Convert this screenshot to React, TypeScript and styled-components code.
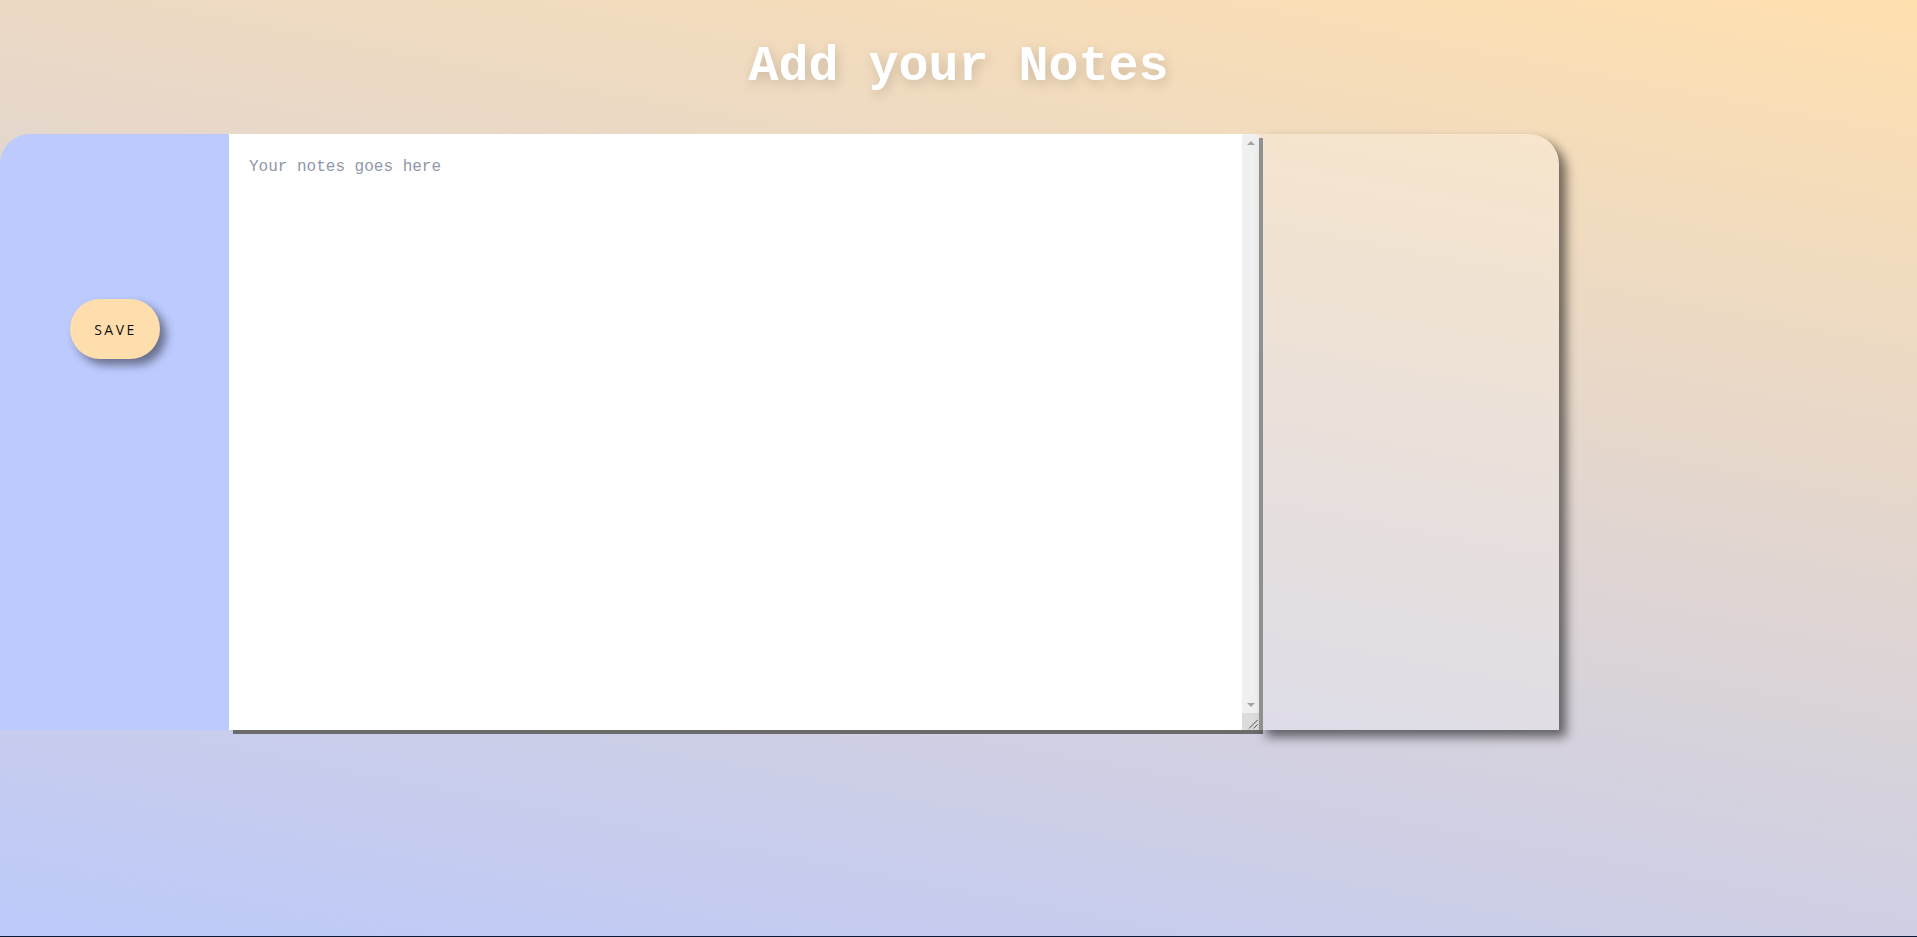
import styled, { createGlobalStyle } from 'styled-components'

const GlobalStyle = createGlobalStyle`
    * {
        box-sizing: border-box;
    }
    body {
        margin: 0;
        font-family: "Liberation Sans", Arial, sans-serif;
    }
`

const Page = styled.div`
    height: 100vh;
    border-bottom: 1px solid #0c1a3a;
    background: linear-gradient(11deg, #bcc9fa 0%, #ffe0af 100%);
    overflow: hidden;
`

const Header = styled.header`
    height: 134px;
    padding-top: 37px;
`

const Title = styled.h1`
    margin: 0;
    text-align: center;
    font-family: "Liberation Mono", "Courier New", monospace;
    font-size: 50px;
    line-height: 60px;
    font-weight: bold;
    color: #ffffff;
    text-shadow: 2px 4px 12px rgba(0, 0, 0, 0.16);
`

const Board = styled.div`
    display: flex;
    height: 596px;
    width: 1559px;
`

const SidePanel = styled.div`
    flex: 0 0 229px;
    background: #bccafe;
    border-top-left-radius: 30px;
    padding-top: 165px;
    display: flex;
    justify-content: center;
    align-items: flex-start;
`

const SaveButton = styled.button`
    width: 90px;
    height: 60px;
    border: none;
    border-radius: 30px;
    background: #ffdead;
    color: #111111;
    font-family: "Open Sans", "Noto Sans", sans-serif;
    font-size: 14px;
    letter-spacing: 2.5px;
    padding: 0 0 0 2px;
    box-shadow: 6px 6px 10px rgba(0, 0, 0, 0.45);
    cursor: pointer;
`

const Editor = styled.div`
    flex: 0 0 1030px;
    display: flex;
    background: #ffffff;
    box-shadow: 4px 4px 0 #6b6b6b;
`

const NoteArea = styled.textarea`
    flex: 1;
    height: 100%;
    border: none;
    outline: none;
    resize: none;
    padding: 24px 20px 20px 20px;
    margin: 0;
    background: #ffffff;
    font-family: "Liberation Mono", "Courier New", monospace;
    font-size: 16px;
    line-height: 19px;
    color: #222222;

    &::placeholder {
        color: #9097a9;
    }
`

const ScrollBar = styled.div`
    flex: 0 0 17px;
    display: flex;
    flex-direction: column;
    background: #f0f0f0;
`

const ScrollButton = styled.div<{ $down?: boolean }>`
    height: 17px;
    display: flex;
    align-items: center;
    justify-content: center;

    &::before {
        content: '';
        border-left: 4px solid transparent;
        border-right: 4px solid transparent;
        ${p => p.$down ? 'border-top: 4px solid #a3a3a3;' : 'border-bottom: 4px solid #a3a3a3;'}
    }
`

const ScrollTrack = styled.div`
    flex: 1;
`

const Resizer = styled.div`
    height: 17px;
    background: #dcdcdc;
    display: flex;
`

const PreviewPanel = styled.div`
    flex: 0 0 300px;
    background: rgba(255, 255, 255, 0.25);
    border-top-right-radius: 30px;
    box-shadow: 7px 7px 11px rgba(0, 0, 0, 0.55);
`

const App = function() {
    return (
        <Page>
            <GlobalStyle />
            <Header>
                <Title>Add your Notes</Title>
            </Header>
            <Board>
                <SidePanel>
                    <SaveButton>SAVE</SaveButton>
                </SidePanel>
                <Editor>
                    <NoteArea placeholder="Your notes goes here" />
                    <ScrollBar>
                        <ScrollButton />
                        <ScrollTrack />
                        <ScrollButton $down />
                        <Resizer>
                            <svg width="17" height="17" viewBox="0 0 17 17">
                                <path d="M15.5 7 L7 15.5 M15.5 11.5 L11.5 15.5" stroke="#555" strokeWidth="1" fill="none" />
                            </svg>
                        </Resizer>
                    </ScrollBar>
                </Editor>
                <PreviewPanel />
            </Board>
        </Page>
    )
}

export default App
